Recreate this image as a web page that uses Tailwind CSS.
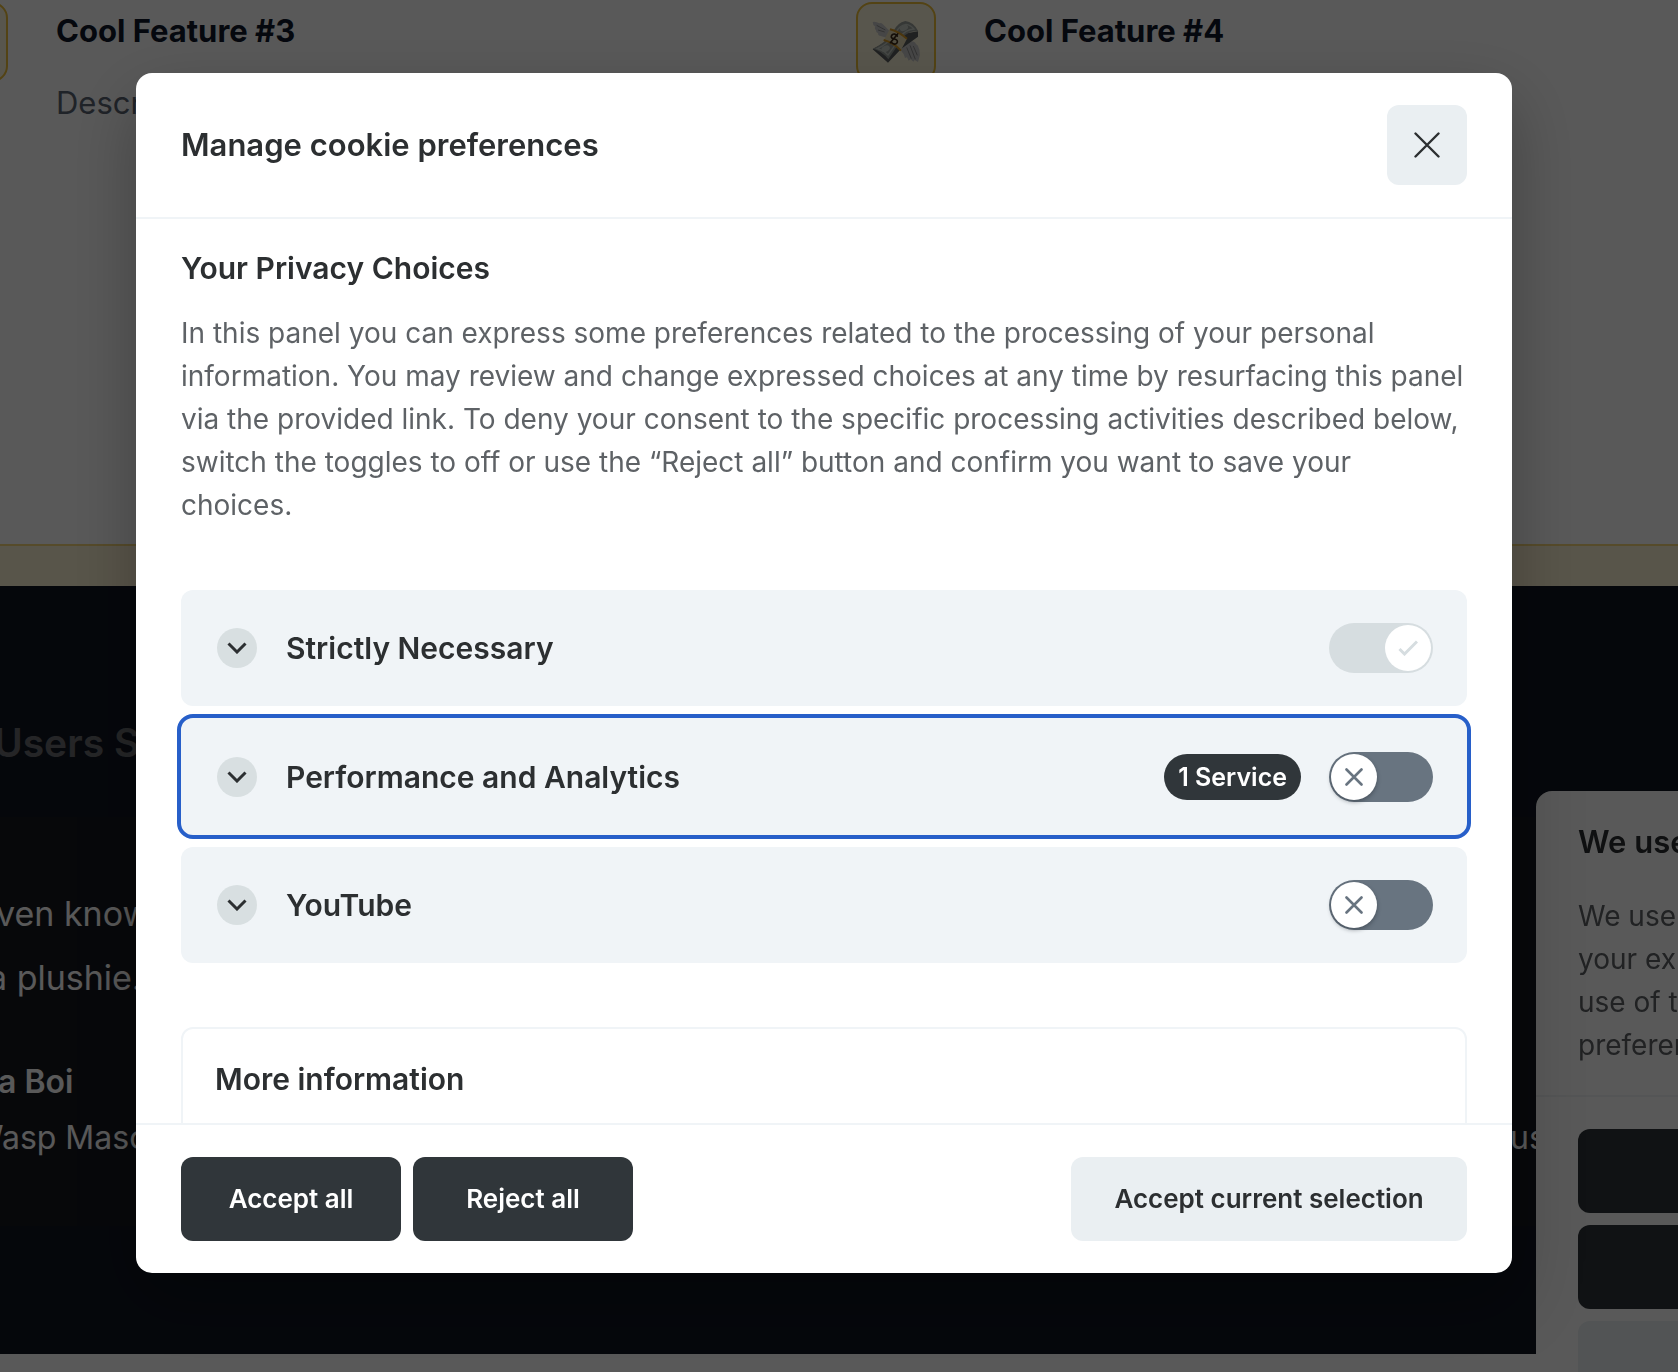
<!DOCTYPE html>
<html lang="en">
<head>
<meta charset="utf-8">
<meta name="viewport" content="width=device-width, initial-scale=1">
<title>Manage cookie preferences</title>
<script src="https://cdn.jsdelivr.net/npm/@tailwindcss/browser@4"></script>
</head>
<body class="h-screen overflow-hidden bg-white font-['Inter',sans-serif] text-[#2c2f31]">

<!-- Page behind the dialog -->
<main>
  <section class="h-[544px] overflow-hidden pt-[2px]">
    <div class="-ml-[72px] grid grid-cols-[928px_928px]">
      <article class="flex gap-12">
        <div class="size-20 shrink-0 rounded-2xl border-2 border-[#eec03a] bg-[#fdf6dc]"></div>
        <div class="pt-[9px]">
          <h3 class="text-[31px] leading-10 font-bold text-[#0f172a]">Cool Feature #3</h3>
          <p class="mt-7 text-[31px] leading-12 text-[#5b6472]">Descr</p>
        </div>
      </article>
      <article class="flex gap-12">
        <div class="size-20 shrink-0 overflow-hidden rounded-2xl border-2 border-[#eec03a] bg-[#fdf6dc]">
          <svg class="size-full" viewBox="18 12 228 228" aria-hidden="true">
            <path d="M112 92 92 72q-5-5-10-2-10-6-20-4 0 10 8 14-4 4 2 11-1 6 6 9 0 8 8 8l10 3 10 2z" fill="#c9c9c9"/>
            <path d="M150 134q10-14 24-10 14-2 18 8 8 4 8 12 4 6 3 14 2 8-1 14l-4 14-10-6-4 5-8-7-6 4-5-10-6 2-4-12-8-10z" fill="#c9c9c9"/>
            <path d="M164 142l14 34M174 136l16 42M184 138l12 28M74 76l26 14M78 90l20 6" stroke="#8f8f8f" stroke-width="3" fill="none"/>
            <path d="M62 148l46 40 40-42 50-36V94l-60 10z" fill="#5c5f60"/>
            <path d="M62 146q36-14 62-52 12-26 36-31 24 2 39 31-30-4-50 22-18 30-40 62-20-26-47-32z" fill="#9aa09b"/>
            <path d="M76 146q32-14 54-46 12-24 32-27 14 2 24 14-26 2-42 24-16 28-36 54-14-14-32-19z" fill="none" stroke="#c8cec6" stroke-width="4"/>
            <ellipse cx="156" cy="84" rx="13" ry="8" fill="#c8cec6" transform="rotate(-25 156 84)"/>
            <ellipse cx="101" cy="146" rx="13" ry="9" fill="#c8cec6" transform="rotate(-25 101 146)"/>
            <path d="M113 88q24 6 52 28l-19 36q-20-20-50-32z" fill="#e7dcb6"/>
            <path d="M114 88q24 6 51 28M95 120q30 8 52 32" fill="none" stroke="#d99a25" stroke-width="6"/>
            <path d="M136 108q-8-10-16-3-6 8 4 11l6 2q10 4 4 12-9 6-17-4M115 128l22-26" fill="none" stroke="#3b2a18" stroke-width="5" stroke-linecap="round"/>
          </svg>
        </div>
        <div class="pt-[9px]">
          <h3 class="text-[31px] leading-10 font-bold text-[#0f172a]">Cool Feature #4</h3>
        </div>
      </article>
    </div>
  </section>
  <div class="h-[42px] border-t-2 border-[#f5d67a] bg-[#fdf3d3]"></div>
  <section class="overflow-hidden bg-[#101522] pt-[137px] pb-32 text-white">
    <h2 class="-ml-1.5 text-[39px] leading-10 font-semibold text-[#6b6c70]">Users S</h2>
    <div class="mt-[54px] bg-[#14171f] pt-[65px] pb-16 whitespace-nowrap">
      <blockquote class="text-[34px] leading-[64px]">
        <p class="-ml-1">ven know</p>
        <p class="-ml-3">a plushie.</p>
      </blockquote>
      <p class="mt-12 -ml-0.5 text-[32px] leading-12 font-semibold">a Boi</p>
      <div class="mt-2 flex text-[32px] leading-12">
        <p class="-ml-7 w-[1538px]">Wasp Masc</p>
        <p>us</p>
      </div>
    </div>
  </section>
</main>

<!-- Consent banner, docked to the lower right corner -->
<aside class="fixed top-[791px] right-0 bottom-0 w-[142px] overflow-hidden rounded-tl-2xl bg-white whitespace-nowrap">
  <div class="border-b-2 border-[#f0f4f7] pt-[31px] pb-7 pl-[42px]">
    <h2 class="text-[31px] leading-10 font-semibold">We use</h2>
    <p class="mt-[33px] text-[28px] leading-[43px] text-[#5e6266]">We use<br>your exp<br>use of t<br>preferen</p>
  </div>
  <div class="flex flex-col gap-3 pt-8 pl-[42px]">
    <button type="button" aria-label="Accept all" class="h-21 w-[700px] rounded-xl bg-[#30363a]"></button>
    <button type="button" aria-label="Reject all" class="h-21 w-[700px] rounded-xl bg-[#30363a]"></button>
    <button type="button" aria-label="Manage preferences" class="h-21 w-[700px] rounded-xl bg-[#eaeff2]"></button>
  </div>
</aside>

<!-- Dialog -->
<div class="fixed inset-0 flex items-center justify-center bg-black/65 pr-[30px] pb-[26px]">
  <div role="dialog" aria-modal="true" aria-labelledby="dialog-title" class="flex h-full max-h-[1200px] w-full max-w-[1376px] flex-col overflow-hidden rounded-2xl bg-white shadow-[0_26px_70px_rgba(2,2,3,0.28)]">
    <header class="flex shrink-0 items-center justify-between border-b-2 border-[#f0f4f7] px-[45px] py-8">
      <h2 id="dialog-title" class="text-[31px] leading-10 font-semibold">Manage cookie preferences</h2>
      <button type="button" aria-label="Close" class="flex size-20 items-center justify-center rounded-xl bg-[#eaeff2]">
        <svg class="size-[26px]" viewBox="0 0 26 26" fill="none" stroke="#2c2f31" stroke-width="2.4" stroke-linecap="round" aria-hidden="true"><path d="M1.5 1.5l23 23M24.5 1.5l-23 23"/></svg>
      </button>
    </header>

    <div class="min-h-0 flex-1 overflow-hidden px-[45px] pt-[29px]">
      <h3 class="text-[30px] leading-10 font-semibold">Your Privacy Choices</h3>
      <p class="mt-6 text-[28px] leading-[43px] text-[#5e6266]">In this panel you can express some preferences related to the processing of your personal information. You may review and change expressed choices at any time by resurfacing this panel via the provided link. To deny your consent to the specific processing activities described below, switch the toggles to off or use the “Reject all” button and confirm you want to save your choices.</p>

      <div class="mt-[63px] flex flex-col gap-3">
        <div class="flex h-29 items-center rounded-xl bg-[#f0f4f7] pr-[34px] pl-9">
          <button type="button" aria-expanded="false" class="flex flex-1 items-center gap-[29px] text-left text-[30px] leading-10 font-semibold">
            <span class="flex size-10 items-center justify-center rounded-full bg-[#d8dfe1]">
              <svg class="h-3 w-5" viewBox="0 0 20 12" fill="none" stroke="#2c2f31" stroke-width="3" aria-hidden="true"><path d="M1.5 1.5L10 10l8.500-8.500"/></svg>
            </span>
            Strictly Necessary
          </button>
          <label class="relative flex h-[50px] w-26 items-center justify-end rounded-full bg-[#d6dde0] p-0.5">
            <input type="checkbox" checked disabled aria-label="Strictly Necessary" class="absolute inset-0 size-full appearance-none rounded-full">
            <span class="flex size-[46px] items-center justify-center rounded-full bg-white">
              <svg class="h-4 w-5" viewBox="0 0 20 16" fill="none" stroke="#d6dde0" stroke-width="3" aria-hidden="true"><path d="M1.500 9l5 5L19 1.500"/></svg>
            </span>
          </label>
        </div>

        <div class="flex h-[117px] items-center rounded-xl bg-[#f0f4f7] pr-[34px] pl-9 outline-4 outline-[#275fc9]">
          <button type="button" aria-expanded="false" class="flex flex-1 items-center gap-[29px] text-left text-[30px] leading-10 font-semibold">
            <span class="flex size-10 items-center justify-center rounded-full bg-[#d8dfe1]">
              <svg class="h-3 w-5" viewBox="0 0 20 12" fill="none" stroke="#2c2f31" stroke-width="3" aria-hidden="true"><path d="M1.5 1.5L10 10l8.500-8.500"/></svg>
            </span>
            Performance and Analytics
          </button>
          <span class="mr-7 flex h-[46px] items-center rounded-full bg-[#30363a] px-3.5 text-[25px] leading-8 font-semibold text-white">1 Service</span>
          <label class="relative flex h-[50px] w-26 items-center rounded-full bg-[#687480] p-0.5">
            <input type="checkbox" aria-label="Performance and Analytics" class="absolute inset-0 size-full appearance-none rounded-full">
            <span class="flex size-[46px] items-center justify-center rounded-full bg-white shadow-[0_2px_4px_rgba(24,32,40,0.4)]">
              <svg class="size-[18px]" viewBox="0 0 18 18" fill="none" stroke="#687480" stroke-width="2.600" stroke-linecap="round" aria-hidden="true"><path d="M1.500 1.500l15 15M16.500 1.500l-15 15"/></svg>
            </span>
          </label>
        </div>

        <div class="flex h-29 items-center rounded-xl bg-[#f0f4f7] pr-[34px] pl-9">
          <button type="button" aria-expanded="false" class="flex flex-1 items-center gap-[29px] text-left text-[30px] leading-10 font-semibold">
            <span class="flex size-10 items-center justify-center rounded-full bg-[#d8dfe1]">
              <svg class="h-3 w-5" viewBox="0 0 20 12" fill="none" stroke="#2c2f31" stroke-width="3" aria-hidden="true"><path d="M1.5 1.5L10 10l8.500-8.500"/></svg>
            </span>
            YouTube
          </button>
          <label class="relative flex h-[50px] w-26 items-center rounded-full bg-[#687480] p-0.5">
            <input type="checkbox" aria-label="YouTube" class="absolute inset-0 size-full appearance-none rounded-full">
            <span class="flex size-[46px] items-center justify-center rounded-full bg-white shadow-[0_2px_4px_rgba(24,32,40,0.4)]">
              <svg class="size-[18px]" viewBox="0 0 18 18" fill="none" stroke="#687480" stroke-width="2.600" stroke-linecap="round" aria-hidden="true"><path d="M1.500 1.500l15 15M16.500 1.500l-15 15"/></svg>
            </span>
          </label>
        </div>
      </div>

      <section class="mt-16 rounded-xl border-2 border-[#f0f4f7] px-8 pt-7 pb-32">
        <h3 class="text-[30px] leading-11 font-semibold">More information</h3>
      </section>
    </div>

    <footer class="flex shrink-0 items-center justify-between border-t-2 border-[#f0f4f7] px-[45px] py-8 text-[26px] leading-8 font-semibold">
      <div class="flex gap-3">
        <button type="button" class="h-21 w-55 rounded-xl bg-[#30363a] text-white">Accept all</button>
        <button type="button" class="h-21 w-55 rounded-xl bg-[#30363a] text-white">Reject all</button>
      </div>
      <button type="button" class="h-21 w-99 rounded-xl bg-[#eaeff2]">Accept current selection</button>
    </footer>
  </div>
</div>
</body>
</html>
